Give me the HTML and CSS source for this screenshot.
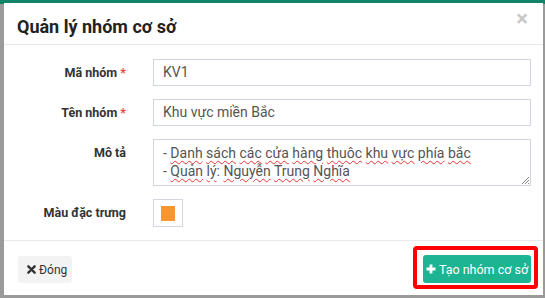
FILE: index.html
```html
<!DOCTYPE html>
<html lang="vi">
  <head>
    <meta charset="utf-8">
    <link rel="stylesheet" href="styles.css">
  </head>
  <body>
    <div class="topbar"></div>

    <div class="modal">
      <div class="modal_header">
        <h4 class="modal_title">Quản lý nhóm cơ sở</h4>
        <span class="close_x">×</span>
      </div>

      <div class="modal_body">
        <div class="form_row">
          <label class="form_label">Mã nhóm <span class="req">*</span></label>
          <div class="form_input">KV1</div>
        </div>
        <div class="form_row">
          <label class="form_label">Tên nhóm <span class="req">*</span></label>
          <div class="form_input">Khu vực miền Bắc</div>
        </div>
        <div class="form_row">
          <label class="form_label">Mô tả</label>
          <div class="form_textarea">
            <div>- <span class="typo">Danh</span> <span class="typo">sách</span> <span class="typo">các</span> <span class="typo">cửa</span> <span class="typo">hàng</span> <span class="typo">thuôc</span> <span class="typo">khu</span> <span class="typo">vực</span> <span class="typo">phía</span> <span class="typo">bắc</span></div>
            <div>- <span class="typo">Quản</span> <span class="typo">lý</span>: <span class="typo">Nguyễn</span> <span class="typo">Trung</span> <span class="typo">Nghĩa</span></div>
            <svg class="grip" width="8" height="8" viewBox="0 0 8 8">
              <path d="M8 1 L1 8 M8 4 L4 8 M8 7 L7 8" stroke="#888" stroke-width="1"/>
            </svg>
          </div>
        </div>
        <div class="form_row">
          <label class="form_label">Màu đặc trưng</label>
          <div class="swatch"><span class="swatch_color"></span></div>
        </div>
      </div>

      <div class="modal_footer">
        <button class="btn btn_default">
          <svg width="9" height="9" viewBox="0 0 10 10">
            <path d="M1.5 1.5 L8.5 8.5 M8.5 1.5 L1.5 8.5" stroke="#333" stroke-width="2.6" stroke-linecap="round"/>
          </svg>
          Đóng
        </button>
        <div class="highlight_wrap">
          <button class="btn btn_primary">
            <svg width="10" height="10" viewBox="0 0 10 10">
              <path d="M5 0.5 V9.5 M0.5 5 H9.5" stroke="#fff" stroke-width="2.8"/>
            </svg>
            Tạo nhóm cơ sở
          </button>
          <span class="highlight"></span>
        </div>
      </div>
    </div>
  </body>
</html>
```

FILE: styles.css
```css
html, body {
  margin: 0;
  height: 100%;
  overflow: hidden;
}

body {
  background: #9a9a9a;
  font-family: Roboto, "Liberation Sans", sans-serif;
  position: relative;
}

.topbar {
  height: 4px;
  background: #138468;
}

.modal {
  position: absolute;
  top: 3px;
  left: 4px;
  width: 539px;
  height: 292px;
  background: #fff;
  display: flex;
  flex-direction: column;
}

.modal_header {
  height: 41px;
  border-bottom: 1px solid #e8e8e8;
  display: flex;
  align-items: center;
  justify-content: space-between;
  padding: 0 12px 0 13px;
}

.modal_title {
  margin: 0;
  font-size: 18px;
  font-weight: 700;
  color: #222;
  padding-top: 6px;
}

.close_x {
  font-size: 22px;
  font-weight: 700;
  color: #c8c8c8;
  line-height: 1;
  margin-top: -10px;
  margin-right: 3px;
}

.modal_body {
  padding: 14px 12px 13px 13px;
  display: flex;
  flex-direction: column;
  gap: 13px;
}

.form_row {
  display: grid;
  grid-template-columns: 109px 1fr;
  column-gap: 27px;
  align-items: start;
}

.form_label {
  text-align: right;
  font-size: 12.5px;
  font-weight: 700;
  color: #333;
  line-height: 18px;
  padding-top: 5px;
  white-space: nowrap;
}

.req {
  color: #e8453c;
}

.form_input,
.form_textarea {
  border: 1px solid #d2d6de;
  color: #555;
  font-size: 14px;
  padding: 0 9px;
}

.form_input {
  height: 25px;
  line-height: 25px;
}

.form_textarea {
  line-height: 18px;
  padding-top: 4px;
  box-sizing: border-box;
  height: 47px;
  position: relative;
}

.typo {
  text-decoration: underline wavy #e33;
  text-decoration-thickness: 1px;
  text-underline-offset: 2px;
}

.grip {
  position: absolute;
  right: 1px;
  bottom: 1px;
}

.swatch {
  width: 28px;
  height: 26px;
  border: 1px solid #d2d6de;
  display: flex;
  align-items: center;
  justify-content: center;
}

.swatch_color {
  width: 14px;
  height: 15px;
  background: #f7962f;
}

.modal_footer {
  border-top: 1px solid #eaeaea;
  display: flex;
  justify-content: space-between;
  align-items: flex-start;
  padding: 14px 12px 0 14px;
}

.btn {
  font-family: Roboto, "Liberation Sans", sans-serif;
  font-size: 12px;
  border: none;
  border-radius: 3px;
  display: flex;
  align-items: center;
  gap: 3px;
  white-space: nowrap;
  cursor: pointer;
}

.btn_default {
  background: #f3f3f3;
  color: #333;
  height: 27px;
  width: 54px;
  margin-top: 1px;
  padding: 0 0 0 9px;
}

.btn_primary {
  background: #1db493;
  color: #fff;
  height: 28px;
  width: 108px;
  padding: 0;
  justify-content: center;
  font-size: 12.5px;
}

.highlight_wrap {
  position: relative;
}

.highlight {
  position: absolute;
  left: -10px;
  top: -9px;
  right: -7px;
  bottom: -6px;
  border: 4px solid #ff0000;
  border-radius: 4px;
}
```
